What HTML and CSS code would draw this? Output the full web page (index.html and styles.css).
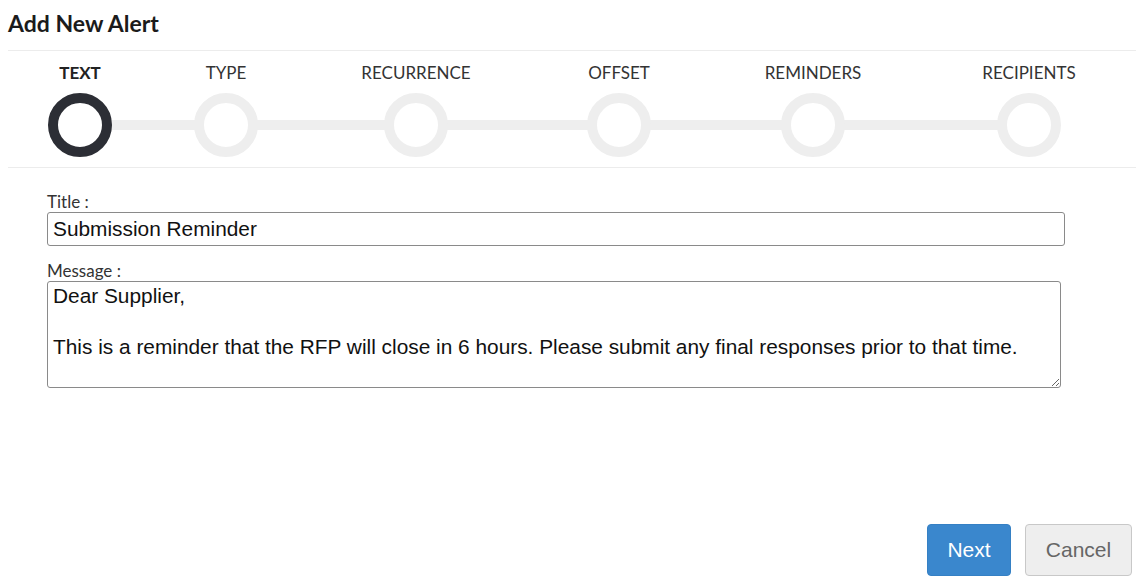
FILE: index.html
```html
<!DOCTYPE html>
<html lang="en">
<head>
    <meta charset="UTF-8">
    <meta name="viewport" content="width=device-width, initial-scale=1.0">
    <title>Add New Alert</title>
    <link rel="stylesheet" href="styles.css">
</head>
<body>
    <div class="dialog">
        <h1>Add New Alert</h1>

        <div class="steps">
            <div class="step active first">
                <span class="step-label">TEXT</span>
                <span class="step-dot"></span>
            </div>
            <div class="step">
                <span class="step-label">TYPE</span>
                <span class="step-dot"></span>
            </div>
            <div class="step">
                <span class="step-label">RECURRENCE</span>
                <span class="step-dot"></span>
            </div>
            <div class="step">
                <span class="step-label">OFFSET</span>
                <span class="step-dot"></span>
            </div>
            <div class="step">
                <span class="step-label">REMINDERS</span>
                <span class="step-dot"></span>
            </div>
            <div class="step last">
                <span class="step-label">RECIPIENTS</span>
                <span class="step-dot"></span>
            </div>
        </div>

        <form class="alert-form">
            <label for="title">Title :</label>
            <input type="text" id="title" value="Submission Reminder">

            <label for="message">Message :</label>
            <textarea id="message">Dear Supplier,

This is a reminder that the RFP will close in 6 hours. Please submit any final responses prior to that time.</textarea>
        </form>

        <div class="actions">
            <button type="button" class="btn btn-primary">Next</button>
            <button type="button" class="btn btn-default">Cancel</button>
        </div>
    </div>
</body>
</html>
```

FILE: styles.css
```css
/* Reset básico */
* {
    margin: 0;
    padding: 0;
    box-sizing: border-box;
}
body {
    background-color: #ffffff;
    color: #222;
    font-family: 'Lato', 'Open Sans', sans-serif;
    padding: 0 4px 0 8px;
}
.dialog {
    display: flex;
    flex-direction: column;
    height: 587px;
}
h1 {
    font-size: 23px;
    font-weight: bold;
    color: #1b1b1b;
    line-height: 46px;
    height: 51px;
    border-bottom: 1px solid #ececec;
}

/* Pasos */
.steps {
    display: grid;
    grid-template-columns: 144px 148px 232px 174px 214px 218px;
    height: 117px;
    border-bottom: 1px solid #ececec;
}
.step {
    display: flex;
    flex-direction: column;
    align-items: center;
    overflow: hidden;
    position: relative;
    z-index: 0;
}
.step-label {
    font-size: 17px;
    color: #333;
    line-height: 20px;
    margin-top: 12px;
    height: 20px;
}
.step.active .step-label {
    font-weight: bold;
    color: #222;
}
.step-dot {
    position: relative;
    width: 64px;
    height: 64px;
    margin-top: 10px;
    border: 10px solid #eeeeee;
    border-radius: 50%;
    background-color: #fff;
}
.step.active .step-dot {
    border-color: #2c2e35;
}
/* Línea que une los círculos */
.step-dot::before, .step-dot::after {
    content: "";
    position: absolute;
    top: 17px;
    height: 10px;
    background-color: #eeeeee;
    z-index: -1;
}
.step-dot::before {
    right: 100%;
    width: 200px;
}
.step-dot::after {
    left: 100%;
    width: 200px;
}
.step.first .step-dot::before, .step.last .step-dot::after {
    display: none;
}

/* Formulario */
.alert-form {
    display: flex;
    flex-direction: column;
    align-items: flex-start;
    padding: 24px 0 0 39px;
}
label {
    font-size: 17px;
    color: #333;
    line-height: 20px;
}
input, textarea {
    font-family: 'Liberation Sans', Arial, sans-serif;
    font-size: 20.85px;
    color: #111;
    border: 1px solid #8a8a8a;
    border-radius: 3px;
    outline: none;
}
input {
    width: 1018px;
    height: 34px;
    padding: 0 5px;
    margin-bottom: 15px;
}
textarea {
    width: 1014px;
    height: 107px;
    padding: 1px 5px 0;
    line-height: 25.5px;
    resize: vertical;
    overflow: hidden;
}

/* Botones */
.actions {
    margin-top: auto;
    display: flex;
    justify-content: flex-end;
    gap: 14px;
    padding: 0 4px 11px 0;
}
.btn {
    height: 52px;
    font-family: 'Liberation Sans', Arial, sans-serif;
    font-size: 21px;
    border-radius: 4px;
    cursor: pointer;
}
.btn-primary {
    width: 84px;
    background-color: #3a87cd;
    border: 1px solid #3580c4;
    color: #fff;
}
.btn-default {
    width: 107px;
    background-color: #eeeeee;
    border: 1px solid #c8c8c8;
    color: #666;
}
```
